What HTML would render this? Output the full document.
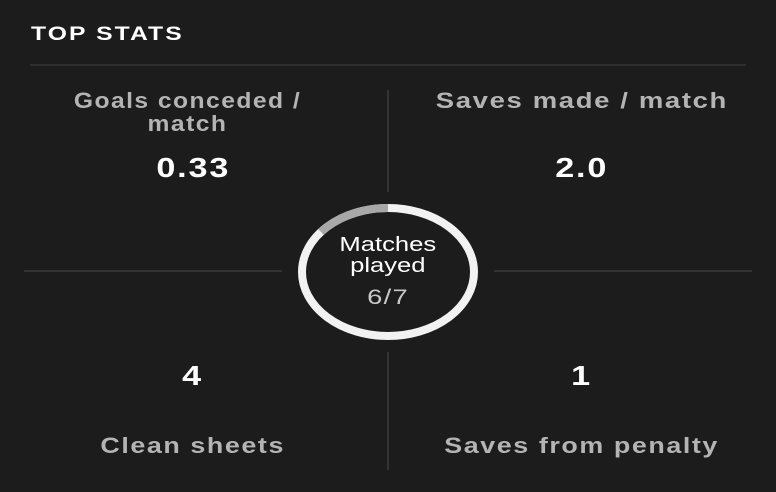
<!DOCTYPE html>
<html><head><style>
html,body{margin:0;padding:0;background:#1c1c1c;width:776px;height:492px;overflow:hidden;font-family:"Liberation Sans",sans-serif;}
.a{position:absolute;}
.s{display:inline-block;transform:scaleX(1.15);}
.h{left:31px;top:24px;color:#fff;font-weight:bold;font-size:19px;letter-spacing:1.6px;transform:scaleX(1.3);transform-origin:left;}
.lab{color:#b4b4b4;font-weight:bold;font-size:22px;letter-spacing:1.3px;text-align:center;line-height:23px;width:330px;}
.lab .s{transform:scaleX(1.22);}
.val{color:#fff;font-weight:bold;font-size:28px;letter-spacing:1.5px;text-align:center;width:330px;}
.val .s{transform:scaleX(1.22);}
.line{background:#333;}
</style></head><body>
<div class="a h">TOP STATS</div>
<div class="a line" style="left:30px;top:64px;width:716px;height:2px;background:#2e2e2e"></div>
<div class="a line" style="left:387px;top:90px;width:2px;height:102px"></div>
<div class="a line" style="left:387px;top:352px;width:2px;height:118px"></div>
<div class="a line" style="left:24px;top:270px;width:258px;height:2px"></div>
<div class="a line" style="left:494px;top:270px;width:258px;height:2px"></div>
<div class="a lab" style="left:22px;top:89px"><span class="s" style="transform:scaleX(1.12)">Goals conceded /<br>match</span></div>
<div class="a lab" style="left:417px;top:89px"><span class="s" style="transform:scaleX(1.25)">Saves made / match</span></div>
<div class="a val" style="left:28px;top:152px"><span class="s">0.33</span></div>
<div class="a val" style="left:417px;top:152px"><span class="s">2.0</span></div>
<div class="a val" style="left:28px;top:360px"><span class="s">4</span></div>
<div class="a val" style="left:417px;top:360px"><span class="s">1</span></div>
<div class="a lab" style="left:28px;top:434px"><span class="s">Clean sheets</span></div>
<div class="a lab" style="left:417px;top:434px"><span class="s">Saves from penalty</span></div>
<svg class="a" style="left:0;top:0" width="776" height="492">
<ellipse cx="388" cy="272" rx="86" ry="64" fill="none" stroke="#f2f2f2" stroke-width="8"/>
<path d="M388 208 A86 64 0 0 0 321 232" fill="none" stroke="#a8a8a8" stroke-width="8"/>
</svg>
<div class="a" style="left:298px;top:235px;width:180px;text-align:center;color:#fff;font-size:20px;line-height:21px"><span class="s" style="transform:scaleX(1.28)">Matches<br>played</span></div>
<div class="a" style="left:298px;top:286px;width:180px;text-align:center;color:#c8c8c8;font-size:21px;letter-spacing:1px"><span class="s" style="transform:scaleX(1.3)">6/7</span></div>
</body></html>
